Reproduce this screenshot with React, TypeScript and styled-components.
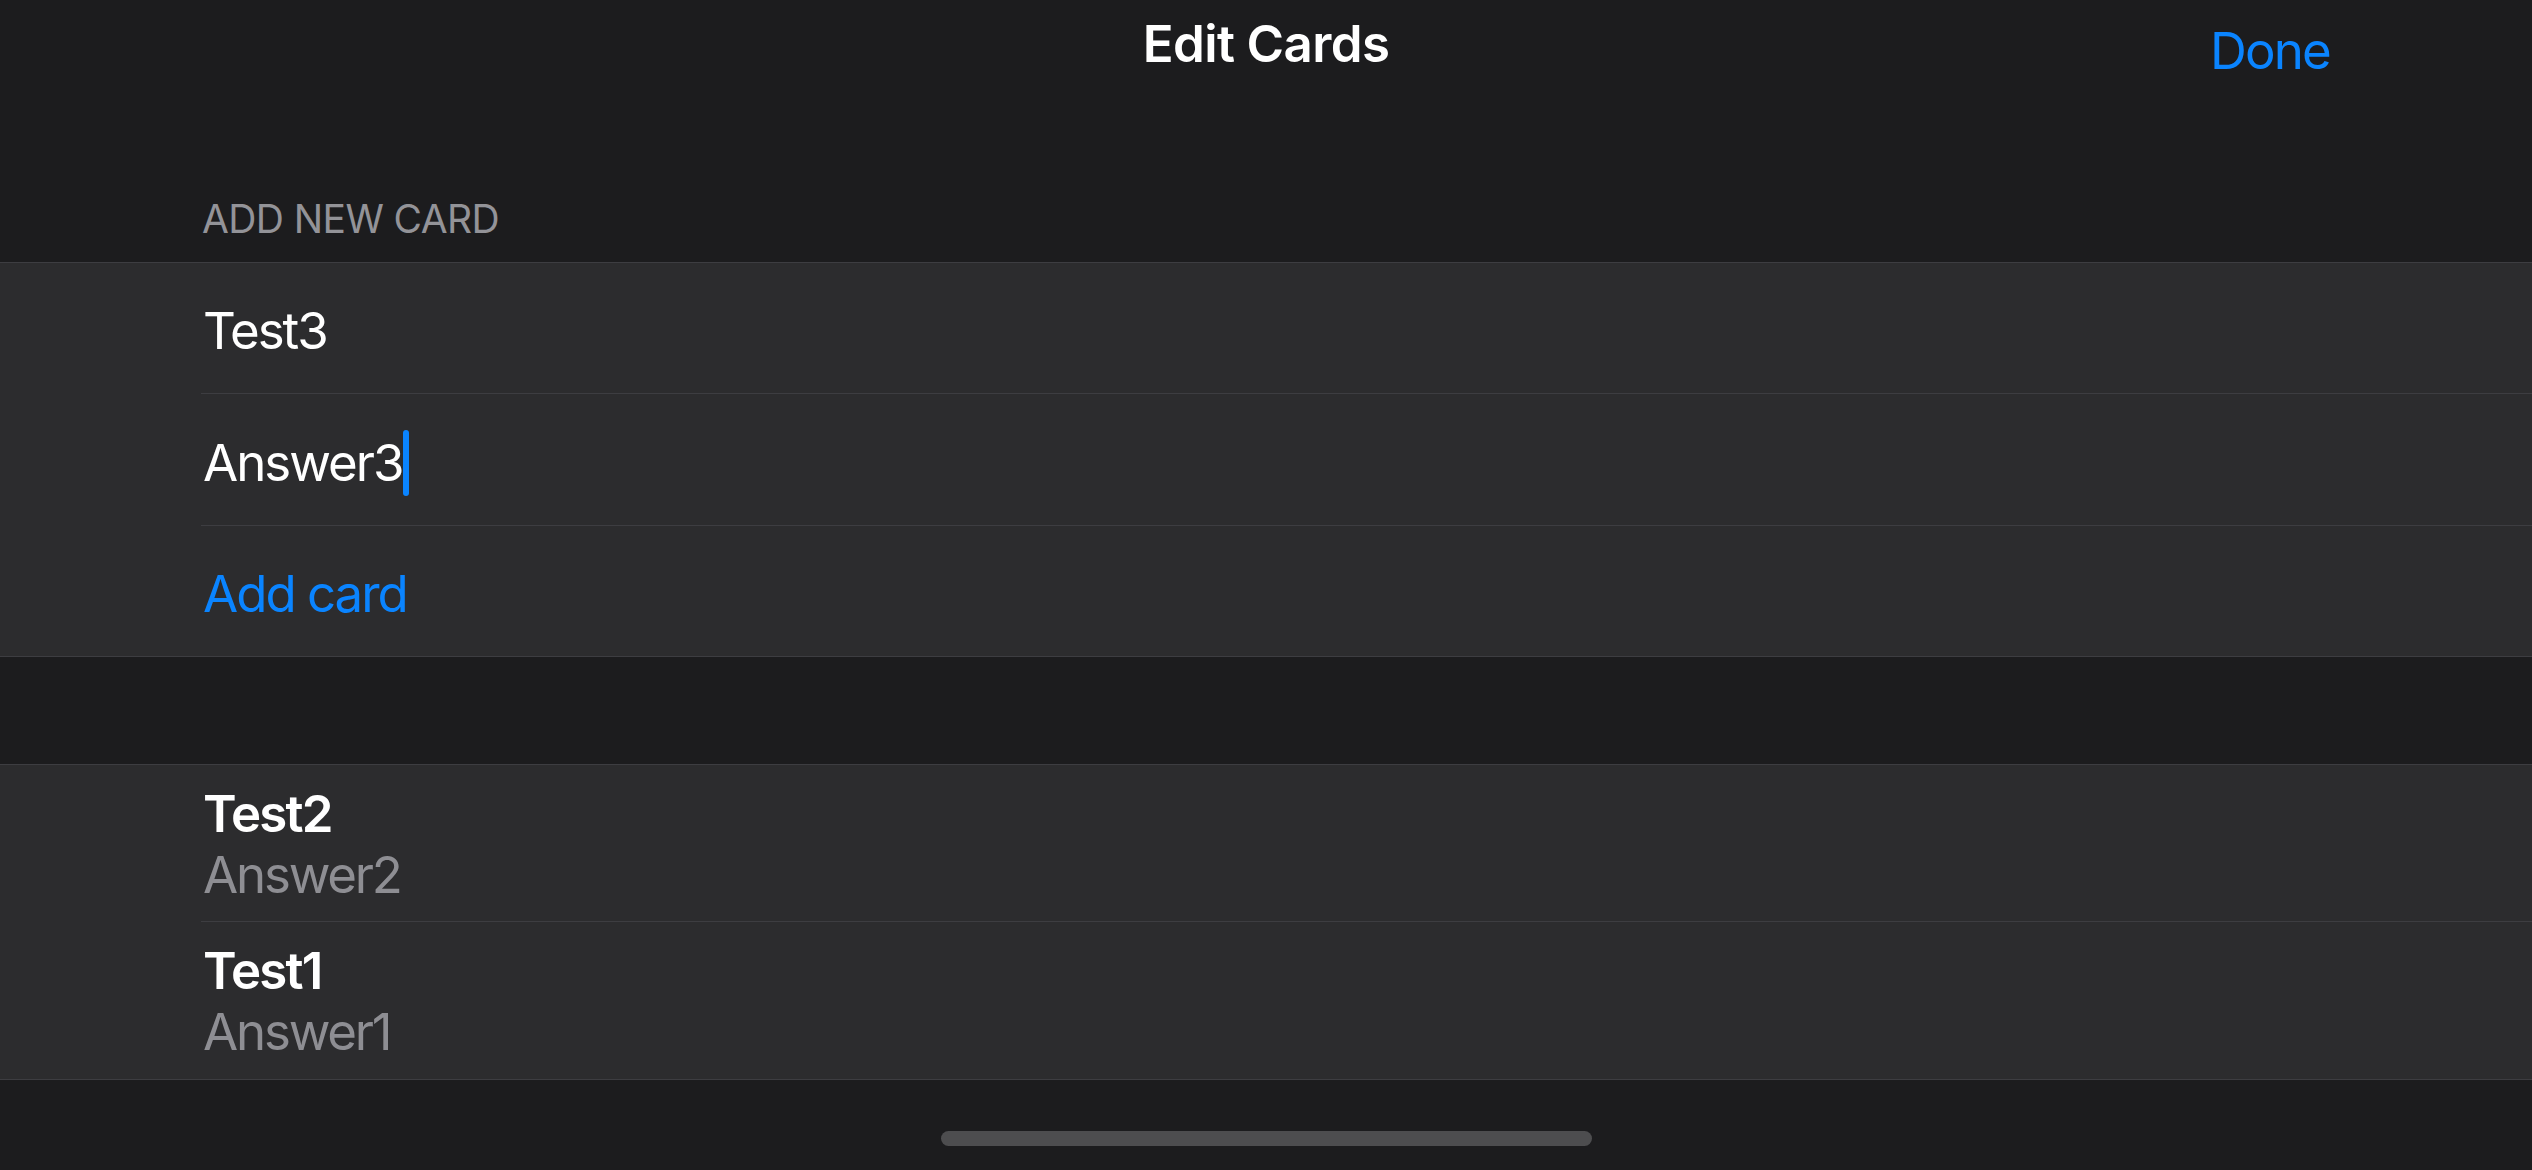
import styled, { createGlobalStyle } from "styled-components";

const color = {
  page: "#1c1c1e",
  cell: "#2c2c2e",
  line: "#3d3d41",
  text: "#ffffff",
  secondary: "#8e8e93",
  blue: "#0a84ff",
};

const GlobalStyle = createGlobalStyle`
  html, body {
    margin: 0;
    padding: 0;
    background: ${color.page};
  }
  body {
    font-family: Inter, "Noto Sans", sans-serif;
    -webkit-font-smoothing: antialiased;
  }
`;

const Screen = styled.div`
  display: flex;
  flex-direction: column;
  height: 100vh;
  background: ${color.page};
  color: ${color.text};
`;

const NavBar = styled.div`
  display: grid;
  grid-template-columns: 1fr auto 1fr;
  align-items: start;
  height: 88px;
  padding: 0 202px;
`;

const Title = styled.div`
  grid-column: 2;
  font-size: 51px;
  font-weight: 600;
  line-height: 88px;
  letter-spacing: -0.6px;
`;

const NavButton = styled.div`
  justify-self: end;
  margin-top: 7px;
  font-size: 51px;
  line-height: 88px;
  color: ${color.blue};
  letter-spacing: -1.8px;
`;

const SectionHeader = styled.div`
  display: flex;
  align-items: flex-end;
  height: 174px;
  box-sizing: border-box;
  padding: 0 0 19px 202px;
  font-size: 39px;
  line-height: 48px;
  color: #939398;
  letter-spacing: -0.6px;
`;

const Group = styled.div`
  background: ${color.cell};
  border-top: 1px solid ${color.line};
  border-bottom: 1px solid ${color.line};
`;

const Gap = styled.div`
  height: 107px;
`;

const Row = styled.div<{ $height: number; $nudge: number; $last?: boolean }>`
  display: flex;
  flex-direction: column;
  justify-content: center;
  box-sizing: border-box;
  height: ${(p) => p.$height}px;
  margin-left: 201px;
  padding: ${(p) => p.$nudge}px 0 0 2px;
  border-bottom: ${(p) => (p.$last ? "none" : `1px solid ${color.line}`)};
`;

const FieldText = styled.div<{ $accent?: boolean }>`
  display: flex;
  align-items: center;
  font-size: 51px;
  line-height: 62px;
  letter-spacing: -2px;
  color: ${(p) => (p.$accent ? color.blue : color.text)};
`;

const Caret = styled.span`
  display: inline-block;
  width: 6px;
  height: 66px;
  margin-left: 0;
  border-radius: 3px;
  background: ${color.blue};
`;

const CardTitle = styled.div`
  font-size: 51px;
  font-weight: 600;
  line-height: 61px;
  letter-spacing: -1.8px;
`;

const CardAnswer = styled.div`
  font-size: 51px;
  line-height: 61px;
  letter-spacing: -2.2px;
  color: ${color.secondary};
`;

const Bottom = styled.div`
  flex: 1;
  display: flex;
  align-items: flex-end;
  justify-content: center;
  padding-bottom: 24px;
`;

const HomeIndicator = styled.div`
  width: 651px;
  height: 15px;
  border-radius: 8px;
  background: #4d4d4f;
`;

const cards = [
  { question: "Test2", answer: "Answer2" },
  { question: "Test1", answer: "Answer1" },
];

export default function App() {
  return (
    <Screen>
      <GlobalStyle />
      <NavBar>
        <Title>Edit Cards</Title>
        <NavButton>Done</NavButton>
      </NavBar>

      <SectionHeader>ADD NEW CARD</SectionHeader>
      <Group>
        <Row $height={131} $nudge={6}>
          <FieldText>Test3</FieldText>
        </Row>
        <Row $height={132} $nudge={6}>
          <FieldText>
            Answer3
            <Caret />
          </FieldText>
        </Row>
        <Row $height={130} $nudge={6} $last>
          <FieldText $accent>Add card</FieldText>
        </Row>
      </Group>

      <Gap />

      <Group>
        {cards.map((card, index) => (
          <Row
            key={index}
            $height={157}
            $nudge={1}
            $last={index === cards.length - 1}
          >
            <CardTitle>{card.question}</CardTitle>
            <CardAnswer>{card.answer}</CardAnswer>
          </Row>
        ))}
      </Group>

      <Bottom>
        <HomeIndicator />
      </Bottom>
    </Screen>
  );
}
